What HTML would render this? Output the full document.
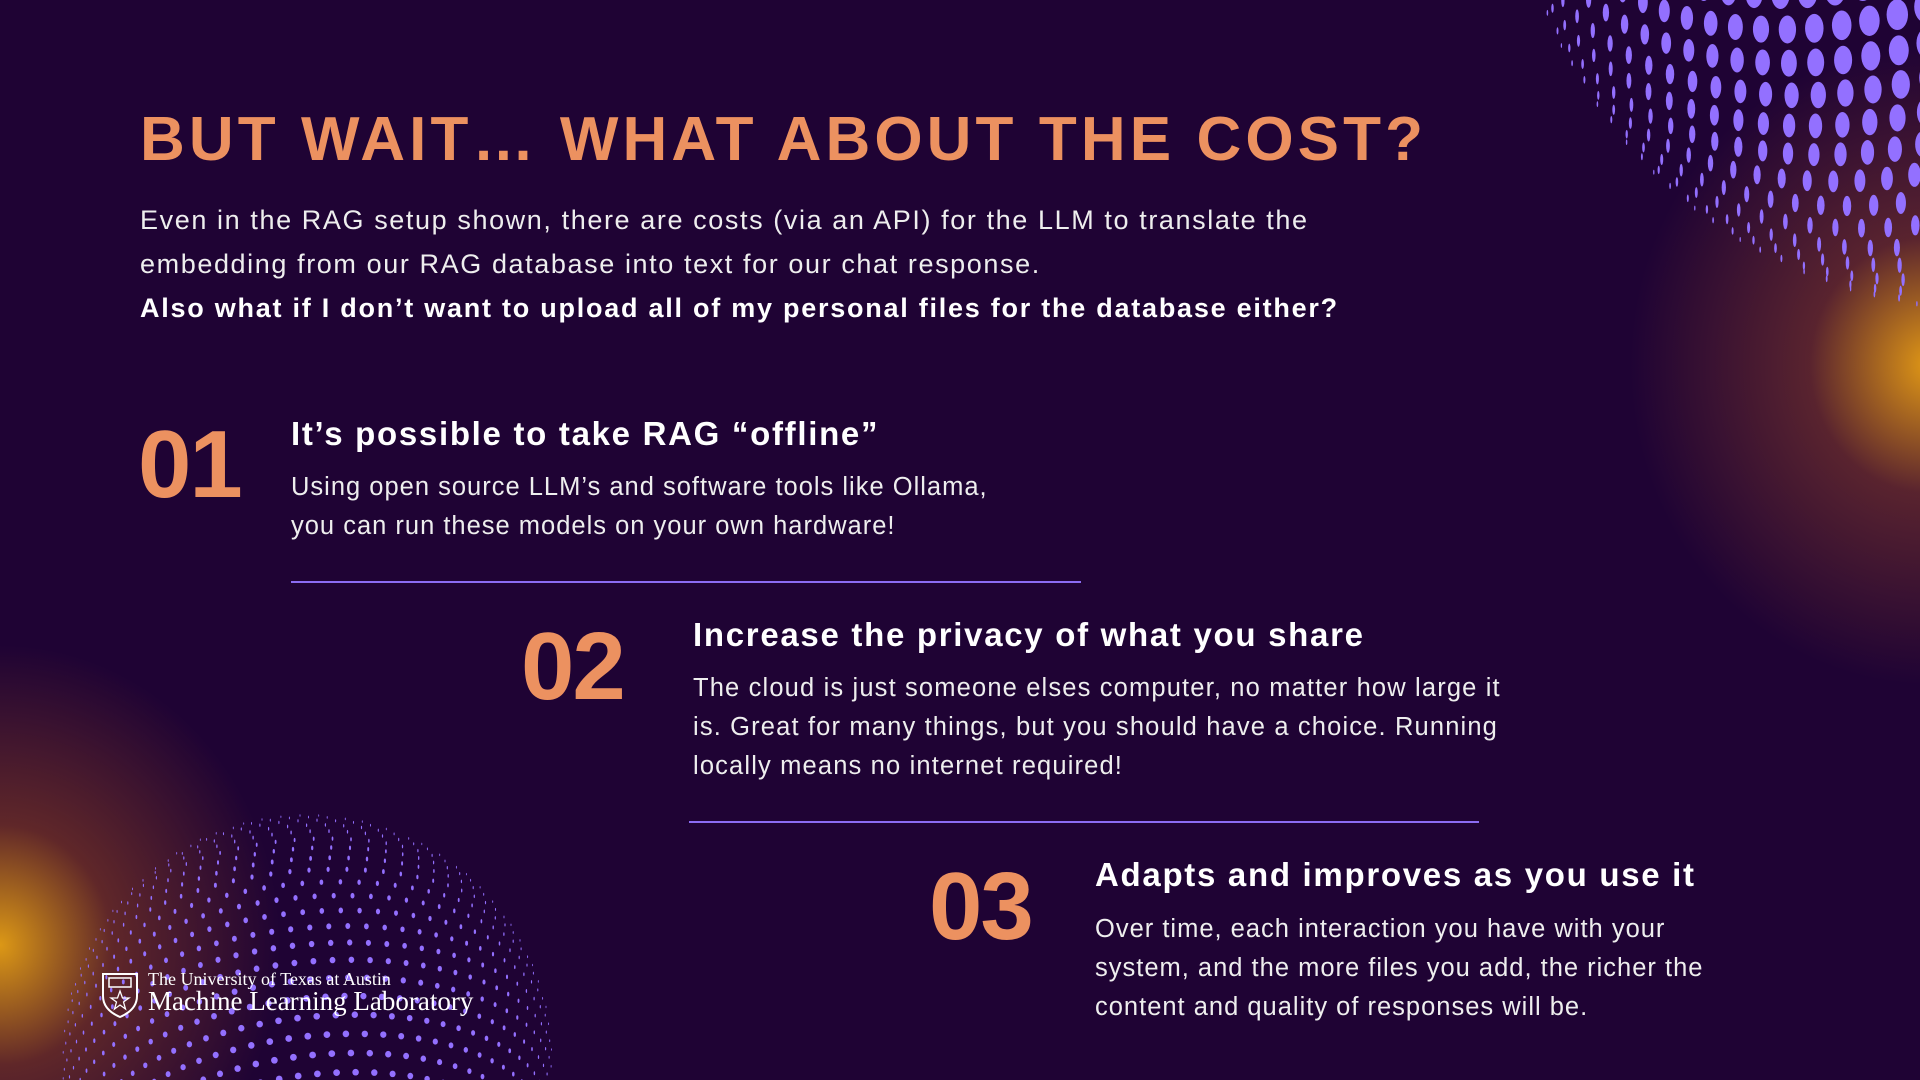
<!DOCTYPE html>
<html><head><meta charset="utf-8"><style>
*{margin:0;padding:0;box-sizing:border-box}
body{width:1920px;height:1080px;overflow:hidden;background:#1f0334;font-family:"Liberation Sans",sans-serif;position:relative;color:#fff}
.bg{position:absolute;inset:0;background:
radial-gradient(ellipse 280px 300px at 0px 945px,rgba(230,160,20,.95),rgba(160,75,30,.5) 40%,rgba(31,3,52,0) 100%),
radial-gradient(ellipse 300px 320px at 1930px 365px,rgba(235,160,20,.95),rgba(160,75,40,.45) 40%,rgba(31,3,52,0) 100%)}
svg.d{position:absolute;left:0;top:0}
.t{position:absolute;white-space:nowrap}
h1{position:absolute;left:140px;top:104px;font-size:62px;font-weight:bold;color:#ec9160;letter-spacing:4.1px}
.p{font-size:27px;line-height:44px;color:#eee;left:140px;top:198px;letter-spacing:1.6px}
.p b{letter-spacing:1.75px}
.num{font-size:96px;font-weight:bold;color:#ec9160;letter-spacing:-2px}
.h{font-size:33px;font-weight:bold;color:#fff;letter-spacing:1.7px}
.b{font-size:25.5px;line-height:39px;color:#eee;letter-spacing:1px}
.ln{position:absolute;height:2px;background:#8b6cf3}
</style></head><body>
<div class="bg"></div>
<svg class="d" width="1920" height="1080" id="s"></svg>
<h1>BUT WAIT… WHAT ABOUT THE COST?</h1>
<div class="t p">Even in the RAG setup shown, there are costs (via an API) for the LLM to translate the<br>embedding from our RAG database into text for our chat response.<br><b style="color:#fff">Also what if I don’t want to upload all of my personal files for the database either?</b></div>

<div class="t num" style="left:138px;top:410px">01</div>
<div class="t h" style="left:291px;top:415px">It’s possible to take RAG “offline”</div>
<div class="t b" style="left:291px;top:468px">Using open source LLM’s and software tools like Ollama,<br>you can run these models on your own hardware!</div>
<div class="ln" style="left:291px;top:581px;width:790px"></div>

<div class="t num" style="left:521px;top:612px">02</div>
<div class="t h" style="left:693px;top:616px">Increase the privacy of what you share</div>
<div class="t b" style="left:693px;top:669px;letter-spacing:1.15px">The cloud is just someone elses computer, no matter how large it<br>is. Great for many things, but you should have a choice. Running<br>locally means no internet required!</div>
<div class="ln" style="left:689px;top:821px;width:790px"></div>

<div class="t num" style="left:929px;top:852px">03</div>
<div class="t h" style="left:1095px;top:856px">Adapts and improves as you use it</div>
<div class="t b" style="left:1095px;top:910px">Over time, each interaction you have with your<br>system, and the more files you add, the richer the<br>content and quality of responses will be.</div>

<svg style="position:absolute;left:101px;top:972px" width="38" height="46" viewBox="0 0 38 46">
<path d="M2 2H36V24C36 36 26 42 19 45C12 42 2 36 2 24Z" fill="none" stroke="#fff" stroke-width="2"/>
<rect x="8" y="6" width="22" height="9" fill="none" stroke="#fff" stroke-width="1.5"/>
<path d="M19 19L21.5 26H28L22.5 30L24.5 37L19 33L13.5 37L15.5 30L10 26H16.5Z" fill="none" stroke="#fff" stroke-width="1.3"/>
</svg>
<div class="t" style="left:148px;top:969px;font-family:'Liberation Serif',serif;font-size:18px;color:#fff">The University of Texas at Austin</div>
<div class="t" style="left:148px;top:986px;font-family:'Liberation Serif',serif;font-size:27px;color:#fff">Machine Learning Laboratory</div>

<script>
var s=document.getElementById('s'),o='';
function sph(cx,cy,R,tx,ty,nl,nm,rmin,rmax,ry){
 for(var i=1;i<nl;i++){var la=-Math.PI/2+Math.PI*i/nl;
  var n=Math.max(6,Math.round(nm*Math.cos(la)));
  for(var j=0;j<n;j++){var lo=2*Math.PI*j/n;
   var x=Math.cos(la)*Math.cos(lo),y=Math.sin(la),z=Math.cos(la)*Math.sin(lo);
   var y2=y*Math.cos(tx)-z*Math.sin(tx),z2=y*Math.sin(tx)+z*Math.cos(tx);
   var x3=x*Math.cos(ty)+z2*Math.sin(ty),z3=-x*Math.sin(ty)+z2*Math.cos(ty);
   if(z3<0.03)continue;
   var px=cx+R*x3,py=cy+R*y2;if(py<-20||py>1100||px<-20||px>1940)continue;
   var r=rmin+(rmax-rmin)*z3;
   o+='<ellipse cx="'+px.toFixed(1)+'" cy="'+py.toFixed(1)+'" rx="'+(r*Math.max(.35,z3)).toFixed(2)+'" ry="'+(r*(ry||1)).toFixed(2)+'" fill="#9370ff"/>';
  }}
}
sph(307,1060,245,0.5,0.2,40,80,1.2,3.4);
sph(1990,-170,480,-0.9,-0.5,40,100,1.5,13,1.3);
s.innerHTML=o;
</script>
</body></html>
